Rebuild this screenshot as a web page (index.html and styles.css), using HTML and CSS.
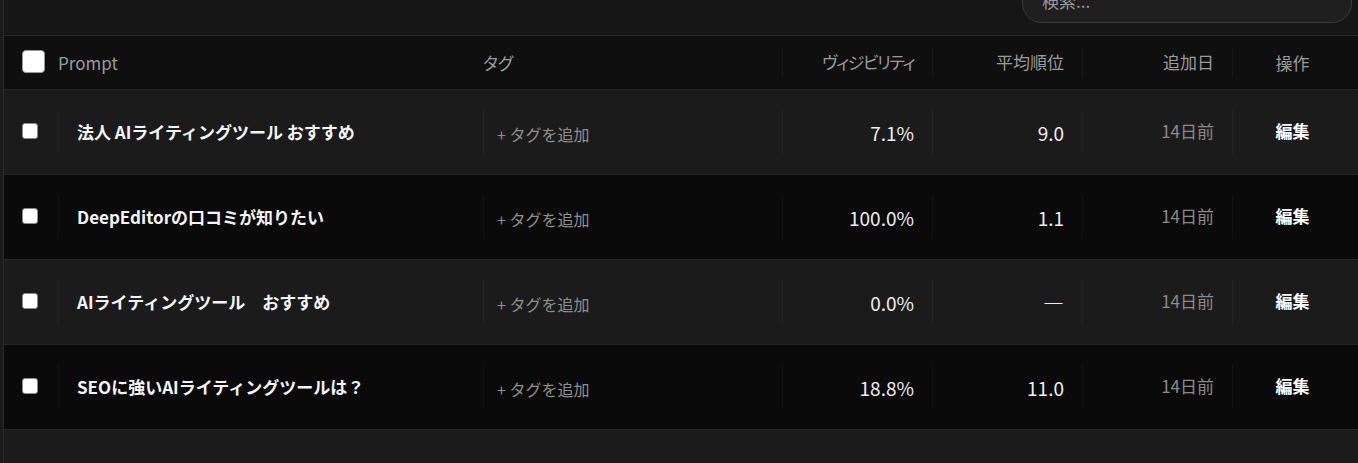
FILE: index.html
```html
<!DOCTYPE html>
<html lang="ja">
<head>
<meta charset="utf-8">
<title>Prompts</title>
<link rel="stylesheet" href="styles.css">
</head>
<body>
<div class="page">
  <div class="toolbar">
    <div class="search">検索...</div>
  </div>
  <div class="table">
    <div class="row head">
      <div class="cell c-check"><span class="cb cb-lg"></span><span class="h-prompt">Prompt</span></div>
      <div class="cell c-prompt"></div>
      <div class="cell c-tag"><span class="h-tag">タグ</span></div>
      <div class="cell c-num"><div class="inner narrow">ヴィジビリティ</div></div>
      <div class="cell c-num"><div class="inner">平均順位</div></div>
      <div class="cell c-num"><div class="inner">追加日</div></div>
      <div class="cell c-act"><div class="inner">操作</div></div>
    </div>

    <div class="row odd">
      <div class="cell c-check"><span class="cb"></span></div>
      <div class="cell c-prompt"><div class="inner">法人 AIライティングツール おすすめ</div></div>
      <div class="cell c-tag"><div class="inner">+ タグを追加</div></div>
      <div class="cell c-num val"><div class="inner">7.1%</div></div>
      <div class="cell c-num val"><div class="inner">9.0</div></div>
      <div class="cell c-num date"><div class="inner">14日前</div></div>
      <div class="cell c-act"><div class="inner">編集</div></div>
    </div>

    <div class="row even">
      <div class="cell c-check"><span class="cb"></span></div>
      <div class="cell c-prompt"><div class="inner">DeepEditorの口コミが知りたい</div></div>
      <div class="cell c-tag"><div class="inner">+ タグを追加</div></div>
      <div class="cell c-num val"><div class="inner">100.0%</div></div>
      <div class="cell c-num val"><div class="inner">1.1</div></div>
      <div class="cell c-num date"><div class="inner">14日前</div></div>
      <div class="cell c-act"><div class="inner">編集</div></div>
    </div>

    <div class="row odd">
      <div class="cell c-check"><span class="cb"></span></div>
      <div class="cell c-prompt"><div class="inner">AIライティングツール　おすすめ</div></div>
      <div class="cell c-tag"><div class="inner">+ タグを追加</div></div>
      <div class="cell c-num val"><div class="inner">0.0%</div></div>
      <div class="cell c-num val"><div class="inner dash">―</div></div>
      <div class="cell c-num date"><div class="inner">14日前</div></div>
      <div class="cell c-act"><div class="inner">編集</div></div>
    </div>

    <div class="row even">
      <div class="cell c-check"><span class="cb"></span></div>
      <div class="cell c-prompt"><div class="inner">SEOに強いAIライティングツールは？</div></div>
      <div class="cell c-tag"><div class="inner">+ タグを追加</div></div>
      <div class="cell c-num val"><div class="inner">18.8%</div></div>
      <div class="cell c-num val"><div class="inner">11.0</div></div>
      <div class="cell c-num date"><div class="inner">14日前</div></div>
      <div class="cell c-act"><div class="inner">編集</div></div>
    </div>
  </div>
</div>
</body>
</html>
```

FILE: styles.css
```css
html, body {
  margin: 0;
  padding: 0;
  background: #1b1b1b;
  font-family: "Noto Sans CJK JP", "Noto Sans", sans-serif;
  overflow: hidden;
}

.page {
  margin-left: 3px;
  border-left: 1px solid #2a2a2a;
  min-height: 463px;
  background: #1b1b1b;
}

.toolbar {
  height: 35px;
  background: #161616;
  display: flex;
  justify-content: flex-end;
  align-items: flex-end;
  padding-right: 6px;
}

.search {
  width: 330px;
  height: 44px;
  margin-bottom: 12px;
  box-sizing: border-box;
  border: 1px solid #3b3b3b;
  border-radius: 20px;
  background: #1f1f1f;
  color: #9a9a9a;
  font-size: 17px;
  padding-left: 19px;
  line-height: 42px;
}

.table {
  border-top: 1px solid #2a2a2a;
}

.row {
  display: grid;
  grid-template-columns: 54px 425px 299px 150px 150px 150px 1fr;
  border-bottom: 1px solid #262626;
}

.row.head {
  height: 53px;
  background: #0f0f0f;
  color: #9b9b9b;
  font-size: 17px;
  font-feature-settings: "palt" 1;
}

.row.odd { height: 84px; background: #1b1b1b; }
.row.even { height: 84px; background: #0a0a0a; }

.cell {
  display: flex;
  align-items: center;
  min-width: 0;
}

.cell .inner {
  height: 44px;
  display: flex;
  align-items: center;
  box-sizing: border-box;
  width: 100%;
  border-left: 1px solid rgba(255, 255, 255, 0.035);
  white-space: nowrap;
}

.head .cell .inner { height: 30px; }

.head .cell .inner.narrow { letter-spacing: -1.5px; }

.c-check {
  padding-left: 18px;
  overflow: visible;
}

.head .c-check { gap: 13px; }

.cb {
  flex: none;
  width: 16px;
  height: 16px;
  box-sizing: border-box;
  background: #ffffff;
  border: 1px solid #8a8a8a;
  border-radius: 3px;
  margin-top: -3px;
}

.cb-lg {
  width: 23px;
  height: 23px;
  border-radius: 4px;
  border-color: #9a9a9a;
  margin-top: -2px;
}

.h-prompt {
  color: #9b9b9b;
  font-size: 17px;
  margin-top: -1px;
}

.h-tag { margin-left: 0; margin-top: -1px; }

.c-prompt .inner {
  padding-left: 18px;
  color: #f4f4f4;
  font-weight: 700;
  font-size: 17px;
  padding-bottom: 1px;
}

.c-tag .inner {
  padding-left: 13px;
  color: #8e8e8e;
  font-size: 16px;
  padding-top: 4px;
}

.c-num .inner {
  justify-content: flex-end;
  padding-right: 18px;
}

.head .c-num .inner { padding-bottom: 2px; }

.val .inner {
  color: #eeeeee;
  font-size: 19px;
  padding-bottom: 0;
}

.val .inner.dash {
  font-size: 21px;
  font-weight: 700;
  padding-bottom: 0;
}

.date .inner {
  color: #8a8a8a;
  font-size: 17px;
  padding-bottom: 4px;
}

.c-act .inner {
  justify-content: center;
  padding-right: 6px;
}

.row:not(.head) .c-act .inner {
  color: #ffffff;
  font-weight: 700;
  font-size: 17px;
  padding-bottom: 4px;
}
```
